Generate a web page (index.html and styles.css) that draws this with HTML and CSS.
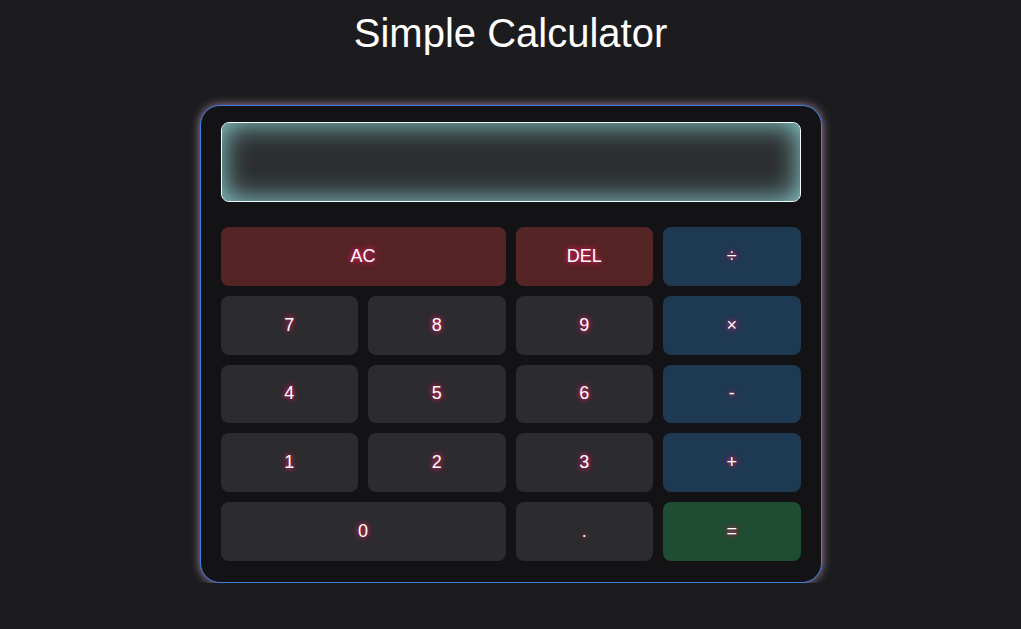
FILE: index.html
```html
<!DOCTYPE html>
<html lang="en">
<head>
    <meta charset="UTF-8">
    <meta name="viewport" content="width=device-width, initial-scale=1.0">
    <title>Simple Calculator</title>
    <link rel="stylesheet" href="styles.css">
</head>
<body>
    <h1>Simple Calculator</h1>
    <div class="calculator">
        <div class="display" id="display"></div>
        <div class="keys">
            <button class="key key-clear span-2">AC</button>
            <button class="key key-clear">DEL</button>
            <button class="key key-op">÷</button>
            <button class="key">7</button>
            <button class="key">8</button>
            <button class="key">9</button>
            <button class="key key-op">×</button>
            <button class="key">4</button>
            <button class="key">5</button>
            <button class="key">6</button>
            <button class="key key-op">-</button>
            <button class="key">1</button>
            <button class="key">2</button>
            <button class="key">3</button>
            <button class="key key-op">+</button>
            <button class="key span-2">0</button>
            <button class="key">.</button>
            <button class="key key-equal">=</button>
        </div>
    </div>
</body>
</html>
```

FILE: styles.css
```css
body {
    margin: 0;
    padding: 10px 0 0;
    font-family: 'Liberation Sans', Arial, sans-serif;
    background: #1c1c1e;
    color: white;
}
h1 {
    margin: 0 0 49px;
    text-align: center;
    font-size: 40px;
    font-weight: normal;
    line-height: 46px;
}
.calculator {
    width: 580px;
    margin: 0 auto;
    padding: 16px 20px 21px;
    background: #131315;
    border: 1px solid #3f7fe0;
    border-radius: 20px;
    box-shadow: 0 0 10px rgba(240, 190, 240, 0.65);
}
.display {
    height: 78px;
    margin-bottom: 25px;
    background: #2c2e30;
    border: 1px solid #f0fafa;
    border-radius: 8px;
    box-shadow: inset 0 0 28px rgba(150, 225, 225, 0.95);
}
.keys {
    display: grid;
    grid-template-columns: repeat(4, 1fr);
    grid-auto-rows: 58.75px;
    gap: 10px;
}
.key {
    border: none;
    border-radius: 8px;
    background: #2c2c2e;
    color: white;
    font-family: inherit;
    font-size: 18px;
    text-shadow: 0 0 5px rgba(255, 30, 110, 1), 0 0 8px rgba(200, 20, 90, 0.8);
    cursor: pointer;
}
.span-2 {
    grid-column: span 2;
}
.key-clear {
    background: #552425;
}
.key-op {
    background: #1e3a52;
}
.key-equal {
    background: #1e4d33;
}
```
